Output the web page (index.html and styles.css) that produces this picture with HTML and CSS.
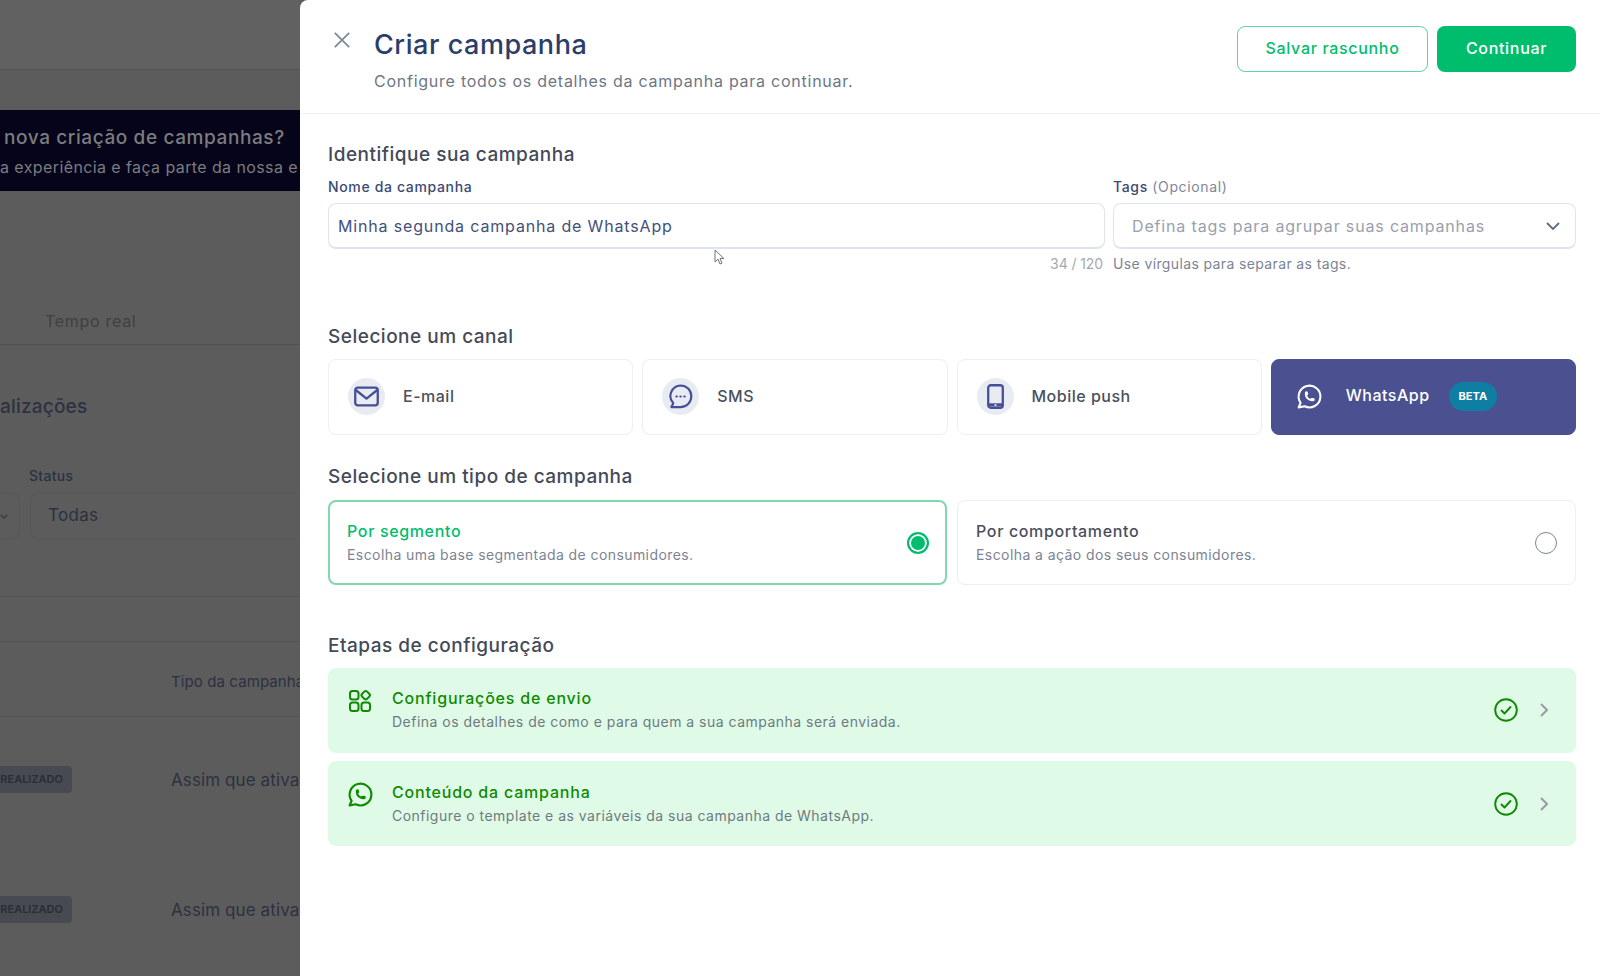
FILE: index.html
```html
<!DOCTYPE html>
<html>
<head>
    <title>Criar campanha</title>
    <meta name="viewport" content="width=device-width, initial-scale=1.0">
    <link rel="stylesheet" href="styles.css">
</head>
<body>
    <!-- Page behind the drawer, dimmed -->
    <div class="backdrop">
        <div class="bd-top"></div>
        <div class="bd-banner">
            <p class="bd-banner-title">nova criação de campanhas?</p>
            <p class="bd-banner-text">a experiência e faça parte da nossa e</p>
        </div>
        <div class="bd-tab">Tempo real</div>
        <h2 class="bd-title">alizações</h2>
        <div class="bd-label">Status</div>
        <div class="bd-filters">
            <div class="bd-select-cut">
                <svg class="bd-chevron" viewBox="0 0 10 6"><path d="M1 1l4 4 4-4"/></svg>
            </div>
            <div class="bd-select">Todas</div>
        </div>
        <div class="bd-line bd-line-a"></div>
        <div class="bd-line bd-line-b"></div>
        <div class="bd-head">Tipo da campanha</div>
        <div class="bd-row bd-row-first">
            <span class="bd-badge">REALIZADO</span>
            <span class="bd-cell">Assim que ativa</span>
        </div>
        <div class="bd-row">
            <span class="bd-badge">REALIZADO</span>
            <span class="bd-cell">Assim que ativa</span>
        </div>
    </div>

    <div class="drawer">
        <header class="drawer-head">
            <button class="close" aria-label="Fechar">
                <svg viewBox="0 0 20 20"><path d="M2 2l16 16M18 2L2 18"/></svg>
            </button>
            <div class="head-text">
                <h1>Criar campanha</h1>
                <p>Configure todos os detalhes da campanha para continuar.</p>
            </div>
            <div class="head-actions">
                <button class="btn btn-outline">Salvar rascunho</button>
                <button class="btn btn-solid">Continuar</button>
            </div>
        </header>

        <main class="drawer-body">
            <h2 class="heading">Identifique sua campanha</h2>
            <div class="fields">
                <div class="field">
                    <label class="label">Nome da campanha</label>
                    <div class="input">Minha segunda campanha de WhatsApp</div>
                    <div class="hint hint-right">34 / 120</div>
                </div>
                <div class="field">
                    <label class="label">Tags <span class="optional">(Opcional)</span></label>
                    <div class="input input-select">
                        <span class="placeholder">Defina tags para agrupar suas campanhas</span>
                        <svg class="select-chevron" viewBox="0 0 14 8"><path d="M1 1l6 6 6-6"/></svg>
                    </div>
                    <div class="hint">Use vírgulas para separar as tags.</div>
                </div>
            </div>

            <h2 class="heading heading-canal">Selecione um canal</h2>
            <div class="channels">
                <div class="channel">
                    <span class="channel-icon">
                        <svg viewBox="0 0 24 24"><rect x="1.200" y="3.500" width="21.600" height="17" rx="2.500"/><path d="M2 6l10 8 10-8"/></svg>
                    </span>
                    <span class="channel-name">E-mail</span>
                </div>
                <div class="channel">
                    <span class="channel-icon">
                        <svg viewBox="0 0 26 26"><path d="M13 1.500a11 11 0 0 1 0 22.500H3.500l2-4A11 11 0 0 1 13 1.500z"/><path class="dots" d="M8.700 13h.5M12.800 13h.5M16.900 13h.5"/></svg>
                    </span>
                    <span class="channel-name">SMS</span>
                </div>
                <div class="channel">
                    <span class="channel-icon">
                        <svg viewBox="0 0 24 24"><rect x="5" y="1.200" width="14" height="21.600" rx="2.500"/><path class="phone-bar" d="M5.500 18.500h13v3h-13z"/><path class="phone-dot" d="M11.800 20.200h.4"/></svg>
                    </span>
                    <span class="channel-name">Mobile push</span>
                </div>
                <div class="channel channel-active">
                    <span class="channel-icon">
                        <svg class="wa" viewBox="0 0 24 24"><path d="M3 21l1.650-3.800a9 9 0 1 1 3.400 2.900L3 21"/><path d="M9 10a.5.5 0 0 0 1 0V9a.5.5 0 0 0-1 0v1a5 5 0 0 0 5 5h1a.5.5 0 0 0 0-1h-1a.5.5 0 0 0 0 1"/></svg>
                    </span>
                    <span class="channel-name">WhatsApp</span>
                    <span class="beta">BETA</span>
                </div>
            </div>

            <h2 class="heading heading-tipo">Selecione um tipo de campanha</h2>
            <div class="types">
                <div class="type type-active">
                    <div class="type-text">
                        <div class="type-title">Por segmento</div>
                        <div class="type-desc">Escolha uma base segmentada de consumidores.</div>
                    </div>
                    <span class="radio"></span>
                </div>
                <div class="type">
                    <div class="type-text">
                        <div class="type-title">Por comportamento</div>
                        <div class="type-desc">Escolha a ação dos seus consumidores.</div>
                    </div>
                    <span class="radio"></span>
                </div>
            </div>

            <h2 class="heading heading-etapas">Etapas de configuração</h2>
            <div class="steps">
                <div class="step">
                    <span class="step-slot">
                        <svg class="step-icon" viewBox="0 0 24 24"><rect x="2" y="2" width="8.500" height="8.500" rx="2.500"/><rect x="2" y="13.500" width="8.500" height="8.500" rx="2.500"/><rect x="13.500" y="13.500" width="8.500" height="8.500" rx="2.500"/><rect x="14.200" y="2.700" width="7" height="7" rx="2" transform="rotate(45 17.700 6.200)"/></svg>
                    </span>
                    <div class="step-text">
                        <div class="step-title">Configurações de envio</div>
                        <div class="step-desc">Defina os detalhes de como e para quem a sua campanha será enviada.</div>
                    </div>
                    <svg class="step-check" viewBox="0 0 24 24"><circle cx="12" cy="12" r="10.800"/><path d="M7.500 12.500l3 3 6-6.500"/></svg>
                    <svg class="step-arrow" viewBox="0 0 8 14"><path d="M1 1l6 6-6 6"/></svg>
                </div>
                <div class="step">
                    <span class="step-slot">
                        <svg class="step-icon wa" viewBox="0 0 24 24"><path d="M3 21l1.650-3.800a9 9 0 1 1 3.400 2.900L3 21"/><path d="M9 10a.5.5 0 0 0 1 0V9a.5.5 0 0 0-1 0v1a5 5 0 0 0 5 5h1a.5.5 0 0 0 0-1h-1a.5.5 0 0 0 0 1"/></svg>
                    </span>
                    <div class="step-text">
                        <div class="step-title">Conteúdo da campanha</div>
                        <div class="step-desc">Configure o template e as variáveis da sua campanha de WhatsApp.</div>
                    </div>
                    <svg class="step-check" viewBox="0 0 24 24"><circle cx="12" cy="12" r="10.800"/><path d="M7.500 12.500l3 3 6-6.500"/></svg>
                    <svg class="step-arrow" viewBox="0 0 8 14"><path d="M1 1l6 6-6 6"/></svg>
                </div>
            </div>
        </main>
    </div>

    <!-- Mouse pointer caught in the capture -->
    <svg class="pointer" viewBox="0 0 11 17"><path d="M1 1v12l3-2.800 2 4.800 2-.8-2-4.600h4z"/></svg>
</body>
</html>
```

FILE: styles.css
```css
/* Base */
* {
    box-sizing: border-box;
    margin: 0;
    padding: 0;
}

body {
    font-family: 'Inter', 'Liberation Sans', sans-serif;
    width: 1600px;
    height: 976px;
    display: flex;
    overflow: hidden;
    position: relative;
    background-color: #5c5c5c;
}

/* Dimmed page behind the drawer */
.backdrop {
    width: 300px;
    flex-shrink: 0;
    overflow: hidden;
    white-space: nowrap;
    color: #2c3142;
}

.bd-top {
    height: 70px;
    background-color: #616161;
    border-bottom: 1px solid #555;
}

.bd-banner {
    margin-top: 40px;
    height: 81px;
    padding: 15px 0 0 4px;
    background-color: #05041a;
    color: #7c7c7f;
}

.bd-banner-title {
    font-size: 19px;
    font-weight: 500;
    line-height: 26px;
    letter-spacing: 0.6px;
}

.bd-banner-text {
    font-size: 16px;
    line-height: 22px;
    margin: 5px 0 0 -4px;
    letter-spacing: 0.4px;
}

.bd-tab {
    margin-top: 118px;
    padding: 0 0 13px 45px;
    height: 36px;
    line-height: 24px;
    font-size: 16px;
    letter-spacing: 0.7px;
    color: #404040;
    border-bottom: 1px solid #525252;
}

.bd-title {
    margin-top: 48px;
    font-size: 19px;
    font-weight: 500;
    line-height: 28px;
    letter-spacing: 0.2px;
}

.bd-label {
    margin: 45px 0 0 29px;
    font-size: 14px;
    font-weight: 500;
    line-height: 20px;
    letter-spacing: 0.3px;
}

.bd-filters {
    display: flex;
    gap: 10px;
    height: 46px;
    margin-top: 7px;
}

.bd-select-cut {
    width: 20px;
    display: flex;
    align-items: center;
    border: 1px solid #585858;
    border-left: 0;
    border-radius: 0 8px 8px 0;
}

.bd-chevron {
    width: 8px;
    height: 5px;
    fill: none;
    stroke: #3f3f3f;
    stroke-width: 2;
}

.bd-select {
    flex: 1;
    padding-left: 17px;
    line-height: 43px;
    font-size: 17px;
    letter-spacing: 0.3px;
    border: 1px solid #585858;
    border-right: 0;
    border-radius: 8px 0 0 8px;
}

.bd-line {
    height: 1px;
    background-color: #535353;
}

.bd-line-a {
    margin-top: 57px;
}

.bd-line-b {
    margin-top: 44px;
}

.bd-head {
    padding: 29px 0 0 171px;
    height: 75px;
    font-size: 15px;
    line-height: 22px;
    letter-spacing: 0.1px;
    border-bottom: 1px solid #535353;
}

.bd-row {
    display: flex;
    align-items: center;
    height: 27px;
    margin-top: 103px;
}

.bd-row-first {
    margin-top: 49px;
}

.bd-badge {
    display: flex;
    justify-content: flex-end;
    flex-shrink: 0;
    width: 72px;
    height: 27px;
    line-height: 27px;
    font-size: 11px;
    font-weight: 600;
    padding-right: 9px;
    background-color: #474a51;
    border-radius: 0 4px 4px 0;
    color: #2b2d35;
    overflow: hidden;
}

.bd-cell {
    margin-left: 99px;
    font-size: 17px;
    letter-spacing: 0.1px;
}

/* Drawer */
.drawer {
    flex: 1;
    background-color: #fff;
    border-radius: 8px 0 0 0;
}

.drawer-head {
    display: flex;
    height: 114px;
    padding: 26px 24px 0 32px;
    border-bottom: 1px solid #edf2f1;
}

.close {
    width: 20px;
    height: 18px;
    margin: 5px 22px 0 0;
    border: 0;
    background: none;
}

.close svg {
    display: block;
    width: 20px;
    height: 18px;
    fill: none;
    stroke: #7f8a9c;
    stroke-width: 2;
}

.head-text {
    flex: 1;
}

h1 {
    margin-top: 1px;
    font-size: 27px;
    font-weight: 500;
    line-height: 36px;
    letter-spacing: 0.55px;
    color: #2b3e6b;
}

.head-text p {
    font-size: 16px;
    line-height: 36px;
    height: 24px;
    letter-spacing: 0.75px;
    color: #6e7685;
}

.head-actions {
    display: flex;
    gap: 9px;
}

.btn {
    height: 46px;
    padding-bottom: 2px;
    border-radius: 8px;
    font-family: inherit;
    font-size: 16px;
    font-weight: 500;
    letter-spacing: 0.68px;
}

.btn-outline {
    width: 191px;
    background-color: #fff;
    color: #00bd6e;
    border: 1px solid #62d3a5;
}

.btn-solid {
    width: 139px;
    background-color: #00bd6e;
    color: #fff;
    border: 0;
}

.drawer-body {
    padding: 29px 24px 0 28px;
}

.heading {
    font-size: 19px;
    font-weight: 500;
    line-height: 24px;
    letter-spacing: 0.5px;
    color: #444a58;
}

.heading-canal {
    margin-top: 51px;
}

.heading-tipo {
    margin-top: 30px;
}

.heading-etapas {
    margin-top: 49px;
}

/* Fields */
.fields {
    display: grid;
    grid-template-columns: 777px 463px;
    gap: 8px;
    margin-top: 10px;
}

.label {
    display: block;
    font-size: 14px;
    font-weight: 500;
    line-height: 20px;
    letter-spacing: 0.65px;
    color: #3a4a75;
}

.optional {
    font-weight: 400;
    color: #7f8798;
}

.input {
    display: flex;
    align-items: center;
    height: 46px;
    margin-top: 6px;
    padding: 0 9px;
    font-size: 16px;
    letter-spacing: 0.84px;
    color: #42507a;
    border: 1px solid #dfe5ec;
    border-bottom-width: 2px;
    border-radius: 8px;
}

.input-select {
    justify-content: space-between;
    padding: 0 15px 0 18px;
}

.placeholder {
    color: #9aa1ad;
}

.select-chevron {
    width: 14px;
    height: 8px;
    fill: none;
    stroke: #5f6b7c;
    stroke-width: 1.8;
}

.hint {
    margin-top: 5px;
    font-size: 14px;
    line-height: 20px;
    letter-spacing: 0.37px;
    color: #7c8494;
}

.hint-right {
    text-align: right;
    padding-right: 2px;
    letter-spacing: -0.1px;
    color: #a3a9b3;
}

/* Channels */
.channels {
    display: grid;
    grid-template-columns: repeat(4, 1fr);
    gap: 9px;
    margin-top: 10px;
}

.channel {
    display: flex;
    align-items: center;
    height: 76px;
    padding: 0 0 2px 19px;
    border: 1px solid #ebf0f0;
    border-radius: 8px;
}

.channel-icon {
    display: flex;
    align-items: center;
    justify-content: center;
    flex-shrink: 0;
    width: 37px;
    height: 37px;
    border-radius: 50%;
    background-color: #e9ebf3;
}

.channel-icon svg {
    width: 25px;
    height: 25px;
    fill: none;
    stroke: #454f96;
    stroke-width: 2.2;
    stroke-linejoin: round;
    stroke-linecap: round;
}

.channel-icon .phone-bar {
    fill: #454f96;
    stroke: none;
}

.channel-icon .phone-dot {
    stroke: #fff;
    stroke-width: 1.6;
}

.channel-name {
    margin-left: 18px;
    font-size: 16px;
    font-weight: 500;
    letter-spacing: 0.5px;
    color: #4a4f5c;
}

.channel-active {
    background-color: #4b5190;
    border-color: #4b5190;
}

.channel-active .channel-icon {
    background: none;
}

.channel-active .channel-icon svg {
    width: 29px;
    height: 29px;
    stroke: #fff;
    stroke-width: 1.7;
}

.channel-active .channel-name {
    color: #fff;
    margin-top: -3px;
}

.beta {
    margin-left: 19px;
    padding: 0 10px;
    height: 29px;
    line-height: 29px;
    font-size: 11px;
    font-weight: 700;
    color: #fff;
    background-color: #0f7ea3;
    border-radius: 15px;
}

/* Campaign types */
.types {
    display: grid;
    grid-template-columns: repeat(2, 1fr);
    gap: 10px;
    margin-top: 11px;
}

.type {
    display: flex;
    align-items: center;
    justify-content: space-between;
    height: 85px;
    padding: 0 18px 0 18px;
    border: 1px solid #ebf0f0;
    border-radius: 8px;
}

.type-title {
    font-size: 16px;
    font-weight: 500;
    line-height: 22px;
    letter-spacing: 0.65px;
    color: #4a4f5c;
}

.type-desc {
    margin-top: 2px;
    font-size: 14px;
    line-height: 22px;
    letter-spacing: 0.42px;
    color: #7c8494;
}

.radio {
    width: 22px;
    height: 22px;
    border: 1.5px solid #7d8694;
    border-radius: 50%;
}

.type-active {
    border: 2px solid #7fd8ae;
    padding: 0 16px 0 17px;
}

.type-active .type-title {
    color: #00bd6e;
}

.type-active .radio {
    border: 2px solid #00bd6e;
    background-color: #00bd6e;
    box-shadow: inset 0 0 0 2px #fff;
}

/* Steps */
.steps {
    display: flex;
    flex-direction: column;
    gap: 8px;
    margin-top: 10px;
}

.step {
    display: flex;
    align-items: center;
    height: 85px;
    padding: 0 28px 0 20px;
    background-color: #dffbe8;
    border-radius: 8px;
}

.step + .step {
    padding-top: 2px;
}

.step-slot {
    display: flex;
    justify-content: center;
    width: 24px;
    margin: -20px 20px 0 0;
}

.step-icon {
    flex-shrink: 0;
    width: 24px;
    height: 24px;
    fill: none;
    stroke: #108a00;
    stroke-width: 2;
    stroke-linejoin: round;
    stroke-linecap: round;
}

.step-icon.wa {
    width: 29px;
    height: 29px;
    stroke-width: 1.8;
}

.step-text {
    flex: 1;
    margin-top: -1px;
}

.step-title {
    font-size: 16px;
    font-weight: 500;
    line-height: 22px;
    letter-spacing: 0.8px;
    color: #108a00;
}

.step-desc {
    margin-top: 2px;
    font-size: 14px;
    line-height: 22px;
    letter-spacing: 0.48px;
    color: #6f7a80;
}

.step-check {
    width: 24px;
    height: 24px;
    margin-top: -2px;
    fill: none;
    stroke: #108a00;
    stroke-width: 1.9;
    stroke-linecap: round;
    stroke-linejoin: round;
}

.step-arrow {
    width: 8px;
    height: 14px;
    margin: -2px 0 0 22px;
    fill: none;
    stroke: #9a9aa8;
    stroke-width: 2;
}

/* Pointer over the page */
.pointer {
    position: absolute;
    left: 714px;
    top: 249px;
    width: 11px;
    height: 17px;
    fill: #fff;
    stroke: #6b7280;
    stroke-width: 1;
}
```
